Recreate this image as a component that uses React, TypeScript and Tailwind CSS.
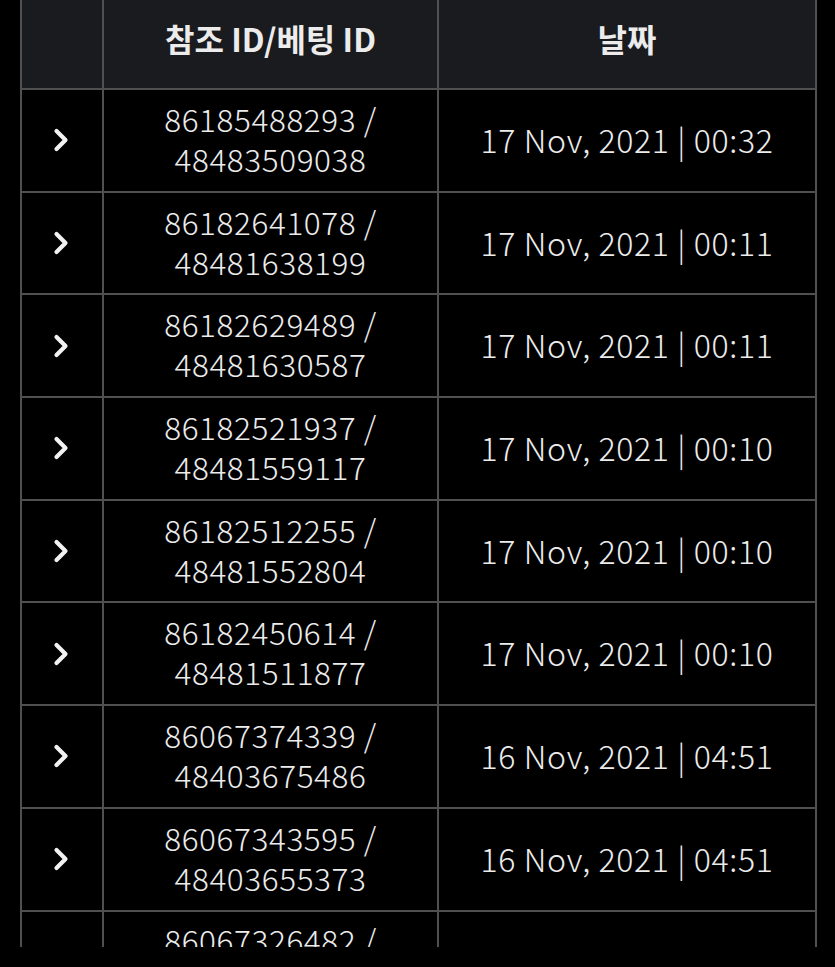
import { ChevronRight } from 'lucide-react'

const rows = [
  ['86185488293', '48483509038', '17 Nov, 2021 | 00:32'],
  ['86182641078', '48481638199', '17 Nov, 2021 | 00:11'],
  ['86182629489', '48481630587', '17 Nov, 2021 | 00:11'],
  ['86182521937', '48481559117', '17 Nov, 2021 | 00:10'],
  ['86182512255', '48481552804', '17 Nov, 2021 | 00:10'],
  ['86182450614', '48481511877', '17 Nov, 2021 | 00:10'],
  ['86067374339', '48403675486', '16 Nov, 2021 | 04:51'],
  ['86067343595', '48403655373', '16 Nov, 2021 | 04:51'],
  ['86067326482', '48403641102', '16 Nov, 2021 | 04:51'],
]

export default function App() {
  return (
    <div
      className="h-[967px] w-[835px] overflow-hidden bg-black"
      style={{ fontFamily: '"Noto Sans CJK KR", "Noto Sans", sans-serif' }}
    >
      <div className="ml-[20px] h-[947px] w-[797px] overflow-hidden">
        <table className="w-full table-fixed border-collapse text-[#ececec]">
          <colgroup>
            <col className="w-[82px]" />
            <col className="w-[335px]" />
            <col />
          </colgroup>
          <thead>
            <tr className="h-[89px] bg-[#1a1b1f]">
              <th className="border-x-2 border-b-2 border-[#505050]"></th>
              <th className="border-x-2 border-b-2 border-[#505050] pb-[12px] text-[32px] font-bold">
                참조 ID/베팅 ID
              </th>
              <th className="border-x-2 border-b-2 border-[#505050] pb-[12px] text-[32px] font-bold">
                날짜
              </th>
            </tr>
          </thead>
          <tbody>
            {rows.map((r, i) => (
              <tr key={i} className="h-[102.7px] bg-black">
                <td className="border-2 border-[#505050]">
                  <div className="flex justify-center pr-[2px]">
                    <ChevronRight className="h-[36px] w-[36px] text-[#f2f2f2]" strokeWidth={2.8} />
                  </div>
                </td>
                <td className="border-2 border-[#505050] pb-[5px] text-center text-[31.5px] font-light leading-[40px] tracking-[0.6px]">
                  {r[0]} /
                  <br />
                  {r[1]}
                </td>
                <td className="border-2 border-[#505050] pb-[3px] text-center text-[32px] font-light tracking-[0.65px]">
                  {r[2]}
                </td>
              </tr>
            ))}
          </tbody>
        </table>
      </div>
    </div>
  )
}
